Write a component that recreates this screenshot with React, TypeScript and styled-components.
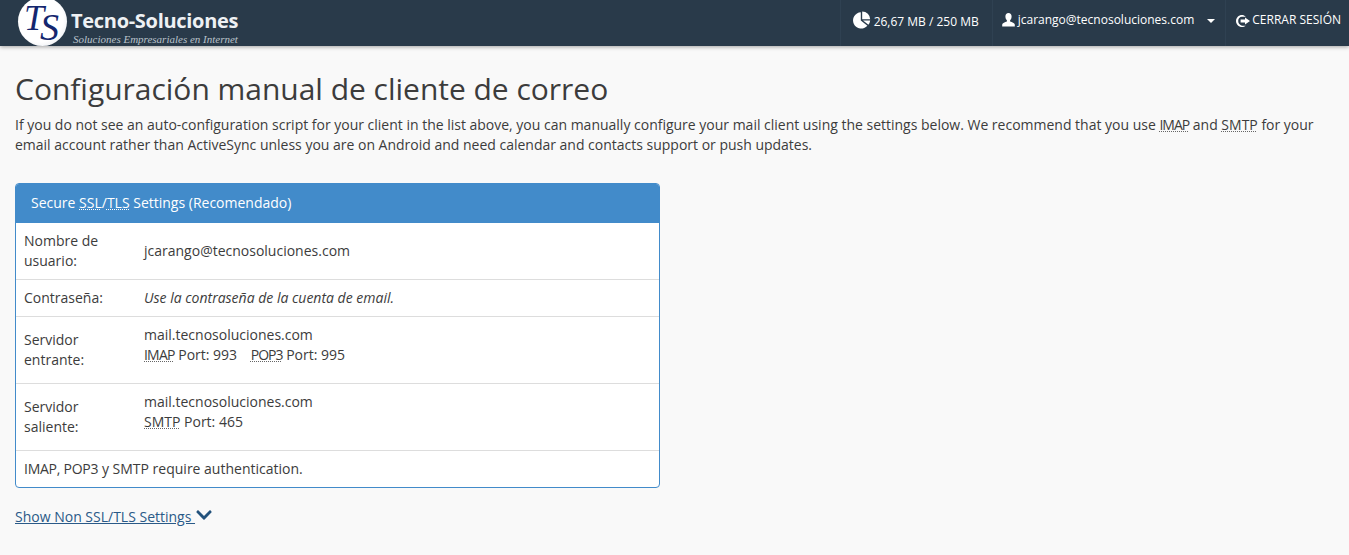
import React from "react";
import styled, { createGlobalStyle } from "styled-components";
import { FaChevronDown } from "react-icons/fa";

const GlobalStyle = createGlobalStyle`
  html, body {
    margin: 0;
    padding: 0;
    background-color: #f9f9f9;
    color: #3c3c3c;
    font-family: "Open Sans", "Liberation Sans", sans-serif;
    font-size: 14px;
    line-height: 20px;
  }
  * { box-sizing: border-box; }
`;

export default function App() {
  return (
    <>
      <GlobalStyle />
      <Header>
        <Brand>
          <Badge>
            <BadgeT>T</BadgeT>
            <BadgeS>S</BadgeS>
          </Badge>
          <BrandText>
            <BrandName>Tecno-Soluciones</BrandName>
            <BrandTag>Soluciones Empresariales en Internet</BrandTag>
          </BrandText>
        </Brand>
        <Nav>
          <NavItem $pad="11px 13px 0 12px">
            <svg width="19" height="18" viewBox="0 0 19 18" fill="#fff">
              <path d="M7.8 1.2a8.2 8.2 0 1 0 6.6 13.6L7.8 9.4z" />
              <path d="M9.2 0.4v7.8h8a8 8 0 0 0-8-7.8z" />
              <path d="M10 9.6l5.4 4.2a8 8 0 0 0 1.8-4.2z" />
            </svg>
            26,67 MB / 250 MB
          </NavItem>
          <NavItem $pad="11px 10px 0 9px">
            <UserIcon width="13" height="14" viewBox="0 0 13 14" fill="#fff">
              <path d="M6.5 0C4.6 0 3.4 1.4 3.4 3.4c0 1.5.6 3 1.5 3.8v1.2C3 9.3.4 9.6.2 11.4V13.6h12.6v-2.2c-.2-1.8-2.8-2.1-4.7-3V7.2c.9-.8 1.5-2.3 1.5-3.8C9.6 1.4 8.4 0 6.5 0z" />
            </UserIcon>
            jcarango@tecnosoluciones.com
            <Caret />
          </NavItem>
          <NavItem $pad="11px 8px 0 10px">
            <svg width="14" height="12" viewBox="0 0 14 12" fill="#fff">
              <path d="M6 0C2.7 0 0 2.7 0 6s2.7 6 6 6c1.4 0 2.7-.5 3.7-1.3H6C3.8 10.2 2.2 8.3 2.2 6S3.8 1.8 6 1.8h3.7C8.7.6 7.4 0 6 0z" />
              <path d="M9 2.4V4.4H4.6v3.2H9v2L14 6z" />
            </svg>
            CERRAR SESIÓN
          </NavItem>
        </Nav>
      </Header>

      <Main>
        <Title>Configuración manual de cliente de correo</Title>
        <Intro>
          If you do not see an auto-configuration script for your client in the list above, you can
          manually configure your mail client using the settings below. We recommend that you use{" "}
          <Abbr $tight={-1}>IMAP</Abbr> and <Abbr>SMTP</Abbr> for your email account rather than
          ActiveSync unless you are on Android and need calendar and contacts support or push
          updates.
        </Intro>

        <Panel>
          <PanelHeading>
            Secure <Abbr>SSL</Abbr>/<Abbr>TLS</Abbr> Settings (Recomendado)
          </PanelHeading>
          <Table>
            <tbody>
              <tr>
                <LabelCell>Nombre de usuario:</LabelCell>
                <Cell>jcarango@tecnosoluciones.com</Cell>
              </tr>
              <tr>
                <LabelCell>Contraseña:</LabelCell>
                <Cell>
                  <em>Use la contraseña de la cuenta de email.</em>
                </Cell>
              </tr>
              <tr>
                <LabelCell>Servidor entrante:</LabelCell>
                <Cell>
                  <ServerBlock>
                    mail.tecnosoluciones.com
                    <br />
                    <Abbr $tight={-0.8}>IMAP</Abbr> Port: 993 <PortGap />
                    <Abbr $tight={-1}>POP3</Abbr> Port: 995
                  </ServerBlock>
                </Cell>
              </tr>
              <tr>
                <LabelCell>Servidor saliente:</LabelCell>
                <Cell>
                  <ServerBlock>
                    mail.tecnosoluciones.com
                    <br />
                    <Abbr>SMTP</Abbr> Port: 465
                  </ServerBlock>
                </Cell>
              </tr>
              <tr>
                <Cell colSpan={2}>
                  <Tight>IMAP, POP3</Tight> y SMTP require authentication.
                </Cell>
              </tr>
            </tbody>
          </Table>
        </Panel>

        <ToggleLink href="#">
          <ToggleText>Show Non SSL/TLS Settings </ToggleText>
          <FaChevronDown size={18} />
        </ToggleLink>
      </Main>
    </>
  );
}

const Header = styled.header`
  height: 46px;
  background-color: #293a4a;
  display: flex;
  justify-content: space-between;
  box-shadow: 0 1px 4px rgba(0, 0, 0, 0.35);
`;
const Brand = styled.div`
  display: flex;
  align-items: flex-start;
  padding-left: 18px;
`;
const Badge = styled.div`
  position: relative;
  width: 49px;
  height: 49px;
  margin-top: -3px;
  border-radius: 50%;
  background: radial-gradient(circle at 45% 45%, #ffffff 60%, #d9dde6 100%);
  font-family: "Liberation Serif", serif;
  font-style: italic;
  color: #14266f;
`;
const BadgeT = styled.span`
  position: absolute;
  left: 6px;
  top: 3px;
  font-size: 36px;
  line-height: 36px;
`;
const BadgeS = styled.span`
  position: absolute;
  left: 22px;
  top: 11px;
  font-size: 38px;
  line-height: 38px;
`;
const BrandText = styled.div`
  display: flex;
  flex-direction: column;
  margin-left: 4px;
`;
const BrandName = styled.div`
  font-size: 20px;
  font-weight: 700;
  line-height: 26px;
  margin-top: 8px;
  letter-spacing: -0.3px;
  color: #eef1f4;
`;
const BrandTag = styled.div`
  font-family: "Liberation Serif", serif;
  font-style: italic;
  font-size: 11px;
  line-height: 12px;
  margin-top: -1px;
  margin-left: 2px;
  color: #b9c2cb;
  white-space: nowrap;
`;
const Nav = styled.nav`
  display: flex;
`;
const NavItem = styled.div<{ $pad: string }>`
  height: 46px;
  padding: ${(p) => p.$pad};
  border-left: 1px solid #2f4152;
  color: #fff;
  font-size: 12px;
  line-height: 18px;
  white-space: nowrap;
  svg {
    vertical-align: -3px;
    margin-right: 2px;
  }
`;
const UserIcon = styled.svg`
  && {
    margin-right: 3px;
  }
`;
const Caret = styled.span`
  display: inline-block;
  width: 0;
  height: 0;
  margin-left: 13px;
  vertical-align: middle;
  border-top: 4px solid #fff;
  border-left: 4px solid transparent;
  border-right: 4px solid transparent;
`;
const Main = styled.main`
  padding: 0 15px;
`;
const Title = styled.h1`
  margin: 26px 0 10px;
  font-size: 30px;
  font-weight: 400;
  line-height: 33px;
  letter-spacing: -0.02px;
`;
const Intro = styled.p`
  margin: 0 0 28px;
  letter-spacing: -0.007px;
`;
const Abbr = styled.abbr<{ $tight?: number }>`
  letter-spacing: ${(p) => p.$tight ?? 0}px;
  text-decoration: underline dotted #666;
  text-decoration-thickness: 1px;
  text-underline-offset: 1px;
`;
const Tight = styled.span`
  letter-spacing: -0.25px;
`;
const Panel = styled.div`
  width: 645px;
  border: 1px solid #428bca;
  border-radius: 4px;
  background-color: #fff;
  overflow: hidden;
`;
const PanelHeading = styled.div`
  height: 38px;
  padding: 9px 15px;
  background-color: #428bca;
  color: #fff;
  ${Abbr} {
    text-decoration-color: #fff;
  }
`;
const Table = styled.table`
  width: 100%;
  border-collapse: separate;
  border-spacing: 0;
  td {
    border-top: 1px solid #ddd;
  }
  tr:first-child td {
    border-top-color: #428bca;
  }
`;
const Cell = styled.td`
  padding: 8px;
  vertical-align: middle;
`;
const LabelCell = styled(Cell)`
  width: 120px;
`;
const ServerBlock = styled.div`
  padding-bottom: 10px;
`;
const PortGap = styled.span`
  display: inline-block;
  width: 10px;
`;
const ToggleLink = styled.a`
  display: inline-block;
  margin-top: 18px;
  color: #2a5a88;
  text-decoration: none;
  svg {
    vertical-align: -2px;
    color: #23527c;
  }
`;
const ToggleText = styled.span`
  text-decoration: underline;
`;
